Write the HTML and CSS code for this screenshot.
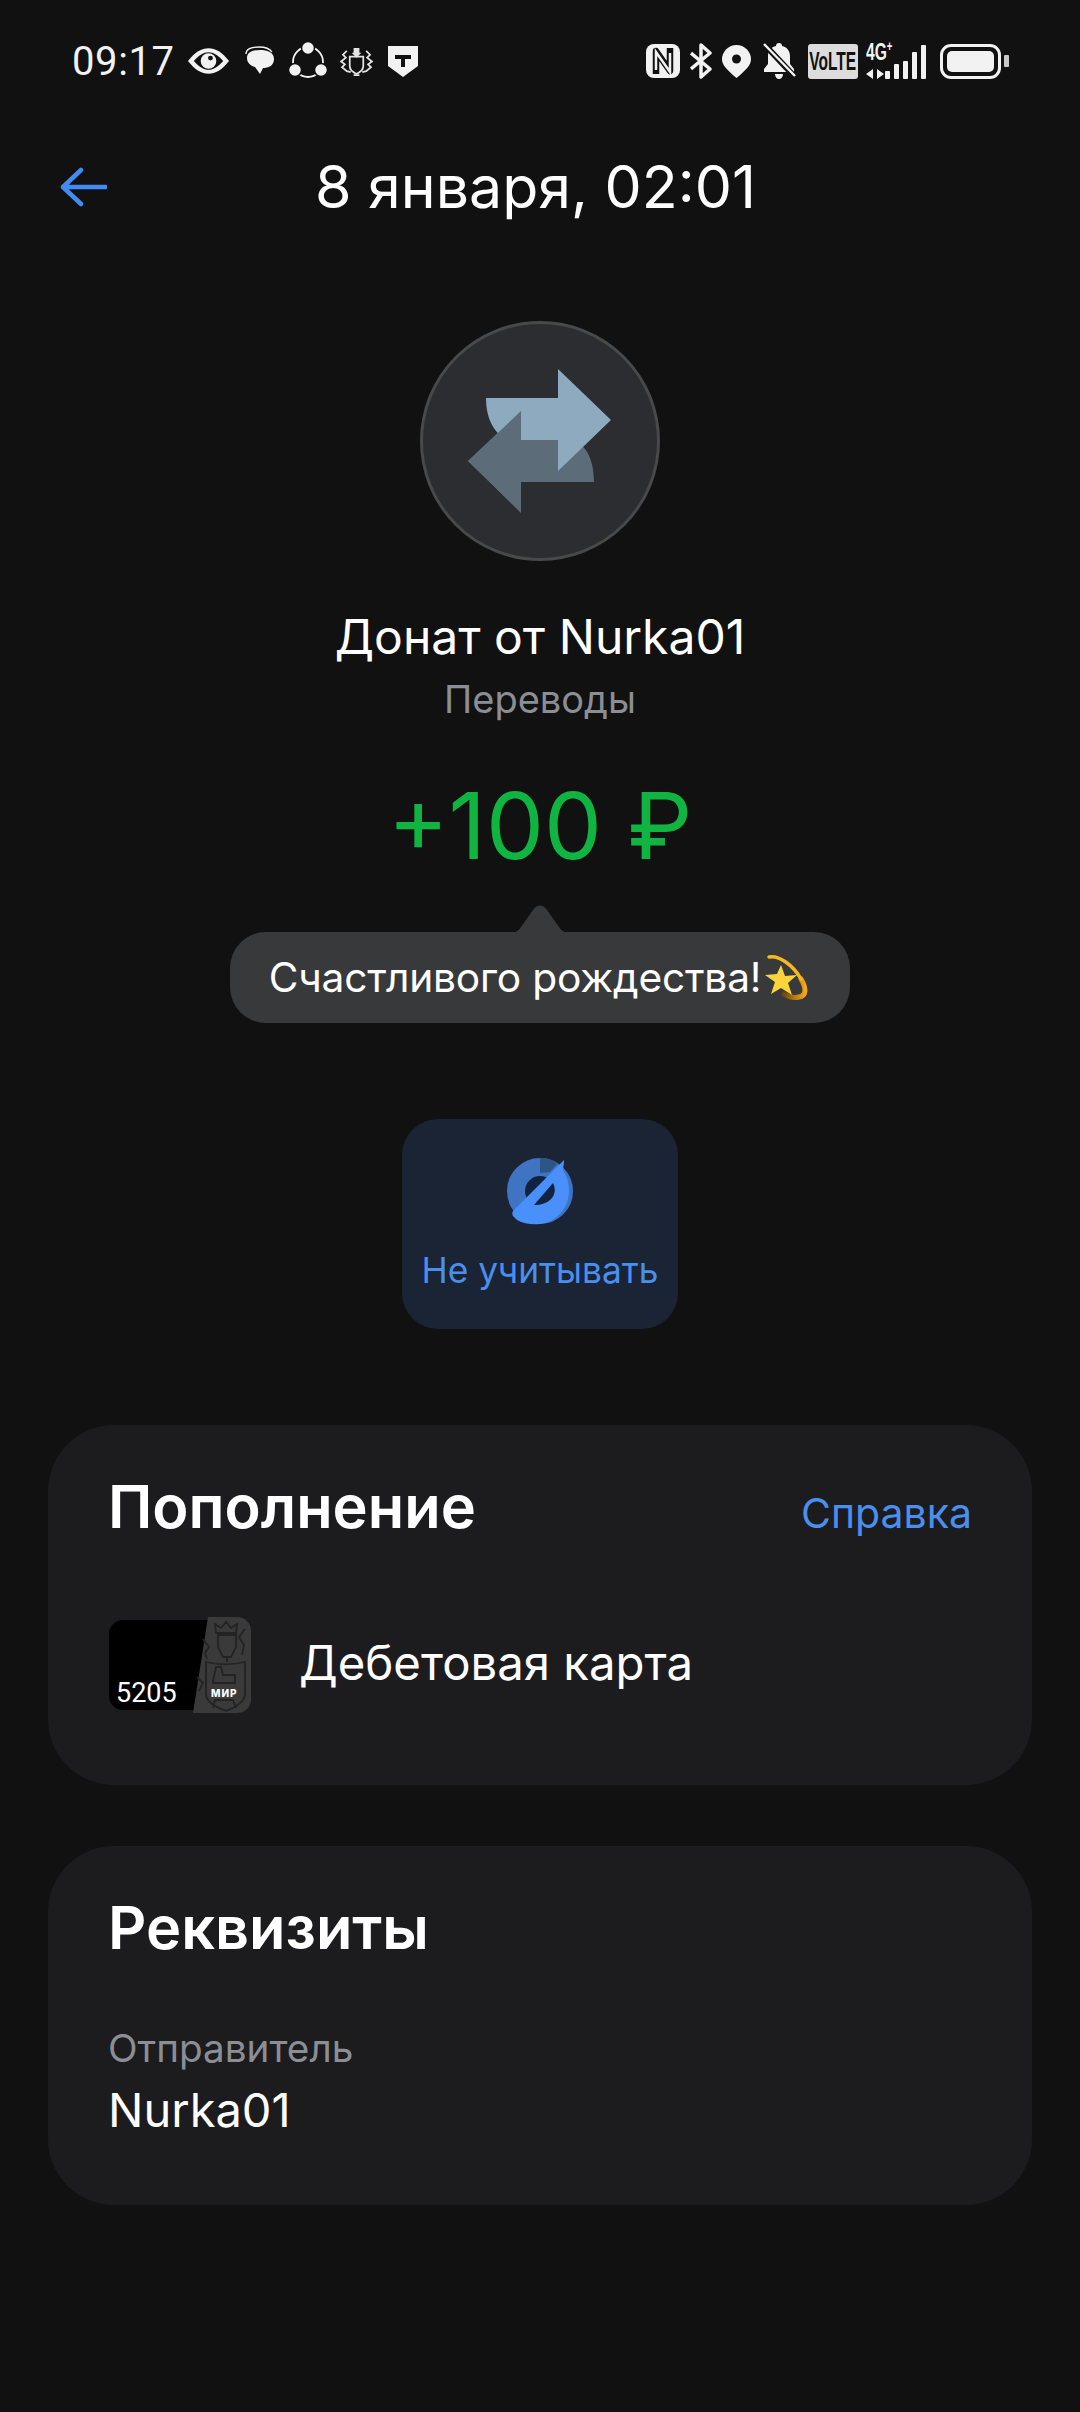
FILE: index.html

```html
<!DOCTYPE html>
<html lang="ru">
<head>
  <meta charset="UTF-8">
  <meta name="viewport" content="width=device-width, initial-scale=1.0">
  <title>Операция</title>
  <link rel="stylesheet" href="styles.css">
</head>
<body>
  <div class="status-bar">
    <div class="status-left">
      <span class="time">09:17</span>
      <svg class="ic-eye" viewBox="0 0 44 28"><path d="M1 14C8 5 15 1 22 1s14 4 21 13c-7 9-14 13-21 13S8 23 1 14Z" fill="#f2f2f2"/><path d="M7 14C12 8 17 5 22 5s10 3 15 9c-5 6-10 9-15 9S12 20 7 14Z" fill="#111"/><circle cx="22" cy="14" r="8" fill="#f2f2f2"/><circle cx="24" cy="11" r="2.500" fill="#111"/></svg>
      <svg class="ic-chat" viewBox="0 0 30 30"><path d="M1 8C1 3 6 1 14 1s11 2 13 5" fill="none" stroke="#f2f2f2" stroke-width="1.300"/><path d="M2 12C2 6 8 4 15 4s14 2 14 9-6 9-11 9l-3 6-5-7C6 20 2 17 2 12Z" fill="#f2f2f2"/></svg>
      <svg class="ic-share" viewBox="0 0 38 38"><circle cx="19" cy="20" r="15" fill="none" stroke="#f2f2f2" stroke-width="1.800"/><circle cx="19" cy="6" r="6.500" fill="#f2f2f2" stroke="#111" stroke-width="1.500"/><circle cx="6" cy="28" r="6.500" fill="#f2f2f2" stroke="#111" stroke-width="1.500"/><circle cx="32" cy="28" r="6.500" fill="#f2f2f2" stroke="#111" stroke-width="1.500"/></svg>
      <svg class="ic-crest" viewBox="0 0 36 30" fill="none" stroke="#e4e4e4" stroke-width="1.800"><path d="M11 10h14v10c0 4-3 6-7 8-4-2-7-4-7-8Z"/><path d="M15 6V1h6v5h2l-5 5-5-5Z" fill="#e4e4e4" stroke="none"/><path d="M8 4 4 8l3 3-5 4 4 3-3 3 5 4 4 1M28 4l4 4-3 3 5 4-4 3 3 3-5 4-4 1M15 29h6"/></svg>
      <svg class="ic-shield" viewBox="0 0 32 31"><path d="M1 0h30v20L16 31 1 20Z" fill="#f2f2f2"/><path d="M8 9h16v4h-6v8h-4v-8H8Z" fill="#111"/></svg>
    </div>
    <div class="status-right">
      <svg class="ic-nfc" viewBox="0 0 34 34"><rect width="34" height="34" rx="8" fill="#f2f2f2"/><path d="M10 30V7l14 20V4" fill="none" stroke="#111" stroke-width="6.500" stroke-linejoin="round"/><path d="M10 26V8l14 20V9" fill="none" stroke="#f2f2f2" stroke-width="2.500"/></svg>
      <svg class="ic-bt" viewBox="0 0 22 36"><path d="M1 10 20 26 11 34V2l9 8L1 26" fill="none" stroke="#f2f2f2" stroke-width="3.500" stroke-linejoin="round"/></svg>
      <svg class="ic-pin" viewBox="0 0 29 33"><path d="M14.500 33C5 25 0 20 0 14.500a14.500 14.500 0 0 1 29 0c0 5.500-5 10.500-14.500 18.500Z" fill="#f2f2f2"/><circle cx="14.500" cy="14" r="4.500" fill="#111"/></svg>
      <svg class="ic-bell" viewBox="0 0 34 38"><path d="M17 1c2 0 3 1 3 3 5 1 8 5 8 10v8l4 5v3H2v-3l4-5v-8c0-5 3-9 8-10 0-2 1-3 3-3ZM13 32h8c0 3-2 5-4 5s-4-2-4-5Z" fill="#f2f2f2"/><path d="M1 1 33 35" stroke="#111" stroke-width="6"/><path d="M2 2 33 34" stroke="#f2f2f2" stroke-width="2.500"/></svg>
      <span class="volte"><span class="volte-text">VoLTE</span></span>
      <div class="net">
        <div class="net-text">
          <span class="net-label">4G<sup class="net-plus">+</sup></span>
          <svg class="ic-updown" viewBox="0 0 18 10"><path d="M7 0v10L0 5ZM11 0v10l7-5Z" fill="#f2f2f2"/></svg>
        </div>
        <div class="bars">
          <i class="bar bar1"></i><i class="bar bar2"></i><i class="bar bar3"></i><i class="bar bar4"></i><i class="bar bar5"></i>
        </div>
      </div>
      <div class="battery"><div class="battery-fill"></div></div>
      <div class="battery-cap"></div>
    </div>
  </div>

  <div class="header">
    <svg class="back" viewBox="0 0 48 40"><path d="M22 3 4 20l18 17M4 20h43" fill="none" stroke="#428bf2" stroke-width="4.500" stroke-linecap="round" stroke-linejoin="round"/></svg>
    <h1 class="header-title">8 января, 02:01</h1>
  </div>

  <div class="summary">
    <div class="avatar">
      <svg class="avatar-icon" viewBox="0 0 144 144">
        <path d="M126 113H53v31L0 92l53-50v29h52c12 4 21 18 21 42Z" fill="#5d6c79"/>
        <path d="M18 29h72V0l53 51-53 51V71H40C28 66 18 52 18 29Z" fill="#8eaabf"/>
        <path d="M0 92 53 42v101Z" fill="#5d6c79"/>
      </svg>
    </div>
    <div class="donor">Донат от Nurka01</div>
    <div class="category">Переводы</div>
    <div class="amount">+100 ₽</div>
    <div class="message">
      <svg class="message-tip" viewBox="0 0 64 28"><path d="M0 28c6 0 10-1 13-6L25 5c4-6 10-6 14 0l12 17c3 5 7 6 13 6Z" fill="#38393b"/></svg>
      <span>Счастливого рождества!</span>
      <svg class="emoji" viewBox="0 0 44 50">
        <defs><linearGradient id="tail" x1="0" y1="0" x2="1" y2="0"><stop offset="0" stop-color="#6b4a10"/><stop offset="1" stop-color="#f5a818"/></linearGradient></defs>
        <path d="M37 26c6 10 5 17-2 18-5 1-11 0-15-3" fill="none" stroke="url(#tail)" stroke-width="5" stroke-linecap="round"/>
        <path d="M5 4c10-2 24 8 32 22" fill="none" stroke="#f5b81f" stroke-width="3.500" stroke-linecap="round"/>
        <path d="M17 12l4 11 12-1-9 8 4 12-11-7-10 6 4-12-10-7 12-1Z" fill="#fbd43c"/>
      </svg>
    </div>
    <div class="action">
      <svg class="action-icon" viewBox="0 0 68 68">
        <circle cx="34" cy="33" r="15" fill="#12233f"/>
        <circle cx="34" cy="33" r="24" fill="none" stroke="#3f74c2" stroke-width="18"/>
        <path d="M34 0a33 33 0 0 1 18 5L44 14 34 15Z" fill="#2e5587"/>
        <path d="M58 2 7 53c-1 2-1 3 0 5l4 4c7 4 15 5 23 4a33 33 0 0 0 29-33c0-8-2-14-6-21l1-8Z" fill="#4a90fa"/>
        <path d="M47 25c3 6 2 12-2 16-4 4-10 6-17 6Z" fill="#12233f"/>
      </svg>
      <span class="action-label">Не учитывать</span>
    </div>
  </div>

  <section class="card card-topup">
    <div class="card-head">
      <h2 class="card-title">Пополнение</h2>
      <span class="link">Справка</span>
    </div>
    <div class="account">
      <div class="thumb">
        <svg class="thumb-art" viewBox="0 0 142 96">
          <rect x="0" y="3" width="130" height="90" rx="14" fill="#000"/>
          <path d="M99 0h29c8 0 14 6 14 14v68c0 8-6 14-14 14H84Z" fill="#3a3a3b"/>
          <g fill="none" stroke="#232324" stroke-width="1.800">
            <path d="M107 16l-1-9 6 4 5-6 5 6 6-4-1 9Z"/>
            <path d="M109 18h18v12l-5 10h-8l-5-10Z"/>
            <path d="M118 40v5"/>
            <path d="M97 45c12 3 27 3 39 0v32c0 7-9 13-19 17-11-4-20-10-20-17Z"/>
            <path d="M104 64l3-14h5l2 8h12v8h-22Z"/>
            <path d="M104 91l2-8h18l3 8"/>
            <path d="M94 22l6 8-4 6 2 6M136 12l-6 8 5 8-2 10M88 60l6 6-4 8"/>
          </g>
        </svg>
        <span class="thumb-num">5205</span>
        <span class="thumb-mir">МИР</span>
      </div>
      <span class="account-name">Дебетовая карта</span>
    </div>
  </section>

  <section class="card card-details">
    <h2 class="card-title">Реквизиты</h2>
    <div class="detail-label">Отправитель</div>
    <div class="detail-value">Nurka01</div>
  </section>
</body>
</html>
```

FILE: styles.css

```css
* {
  box-sizing: border-box;
}
body {
  margin: 0;
  height: 2412px;
  overflow: hidden;
  background: #111;
  color: #fff;
  font-family: Inter, Roboto, sans-serif;
}
svg {
  display: block;
  flex: none;
}

/* status bar */
.status-bar {
  display: flex;
  justify-content: space-between;
  align-items: center;
  height: 100px;
  padding: 22px 71px 0 72px;
}
.status-left, .status-right {
  display: flex;
  align-items: center;
}
.time {
  font-family: Roboto, sans-serif;
  font-size: 40px;
  font-weight: 400;
  letter-spacing: 0.6px;
  color: #f2f2f2;
  margin-right: 12px;
}
.ic-eye { width: 43px; height: 28px; margin-right: 15px; }
.ic-chat { width: 30px; height: 30px; margin-right: 14px; }
.ic-share { width: 38px; height: 38px; margin-right: 12px; }
.ic-crest { width: 35px; height: 29px; margin-right: 13px; }
.ic-shield { width: 32px; height: 31px; }
.ic-nfc { width: 34px; height: 34px; margin-right: 10px; }
.ic-bt { width: 22px; height: 36px; margin-right: 10px; }
.ic-pin { width: 29px; height: 33px; margin-right: 11px; }
.ic-bell { width: 34px; height: 38px; margin-right: 12px; }
.volte {
  display: flex;
  justify-content: center;
  width: 50px;
  height: 35px;
  border-radius: 3px;
  background: #dcdcdc;
  color: #111;
}
.volte-text {
  font-family: "Liberation Sans", sans-serif;
  font-size: 25px;
  font-weight: 700;
  line-height: 35px;
  transform: scaleX(0.62);
}
.net {
  display: flex;
  align-items: flex-end;
  height: 35px;
  margin: 0 14px 0 8px;
}
.net-text {
  display: flex;
  flex-direction: column;
  justify-content: space-between;
  height: 35px;
  width: 18px;
  margin-right: 1px;
}
.net-label {
  font-family: "Liberation Sans", sans-serif;
  font-size: 23px;
  font-weight: 700;
  line-height: 17px;
  white-space: nowrap;
  color: #f2f2f2;
  transform: scaleX(0.68);
  transform-origin: left top;
}
.net-plus {
  font-size: 14px;
  line-height: 0;
}
.ic-updown { width: 18px; height: 10px; }
.bars {
  display: flex;
  align-items: flex-end;
  gap: 4px;
}
.bar {
  display: block;
  width: 5px;
  background: #f2f2f2;
  border-radius: 1px;
}
.bar1 { height: 8px; }
.bar2 { height: 15px; }
.bar3 { height: 18px; }
.bar4 { height: 27px; }
.bar5 { height: 34px; }
.battery {
  width: 61px;
  height: 35px;
  padding: 4px;
  border: 3px solid #f2f2f2;
  border-radius: 11px;
}
.battery-fill {
  height: 100%;
  border-radius: 5px;
  background: #f2f2f2;
}
.battery-cap {
  width: 5px;
  height: 12px;
  margin-left: 3px;
  border-radius: 1px;
  background: #c8c8c8;
}

/* header */
.header {
  position: relative;
  height: 86px;
  margin-top: 43px;
  padding-right: 9px;
  display: flex;
  align-items: center;
  justify-content: center;
}
.back {
  position: absolute;
  left: 59px;
  top: 24px;
  width: 48px;
  height: 40px;
}
.header-title {
  margin: 0;
  font-size: 59px;
  font-weight: 400;
}

/* summary */
.summary {
  display: flex;
  flex-direction: column;
  align-items: center;
  padding-top: 92px;
}
.avatar {
  display: flex;
  align-items: center;
  justify-content: center;
  width: 240px;
  height: 240px;
  border: 3px solid #48494b;
  border-radius: 50%;
  background: #2c2d30;
}
.avatar-icon {
  width: 144px;
  height: 144px;
}
.donor {
  margin-top: 46px;
  font-size: 48px;
  line-height: 60px;
}
.category {
  margin-top: 4px;
  font-size: 38px;
  line-height: 56px;
  color: #8b8e94;
}
.amount {
  margin-top: 47px;
  font-size: 92px;
  line-height: 104px;
  color: #0fb441;
}
.message {
  position: relative;
  display: flex;
  align-items: center;
  height: 91px;
  margin-top: 54px;
  padding: 0 42px 0 39px;
  border-radius: 36px;
  background: #38393b;
  font-size: 40.700px;
  letter-spacing: -0.2px;
  white-space: nowrap;
}
.message-tip {
  position: absolute;
  left: 50%;
  top: -27px;
  width: 64px;
  height: 28px;
  margin-left: -32px;
}
.emoji {
  width: 44px;
  height: 50px;
  margin-left: 3px;
}
.action {
  display: flex;
  flex-direction: column;
  align-items: center;
  width: 276px;
  height: 210px;
  margin-top: 96px;
  padding-top: 39px;
  border-radius: 36px;
  background: #1a2434;
}
.action-icon {
  width: 68px;
  height: 68px;
}
.action-label {
  margin-top: 22px;
  font-size: 35.300px;
  line-height: 46px;
  color: #4a8fee;
  white-space: nowrap;
}

/* cards */
.card {
  margin: 0 48px;
  padding: 48px 60px 0;
  border-radius: 66px;
  background: #1c1c1e;
}
.card-topup {
  height: 360px;
  margin-top: 96px;
}
.card-details {
  height: 359px;
  margin-top: 61px;
}
.card-head {
  display: flex;
  justify-content: space-between;
  align-items: baseline;
}
.card-title {
  margin: 0;
  font-size: 59.500px;
  font-weight: 600;
  line-height: 66px;
}
.link {
  font-size: 41px;
  color: #4a8fee;
}
.account {
  display: flex;
  align-items: center;
  margin-top: 78px;
  padding-left: 1px;
}
.thumb {
  position: relative;
  width: 142px;
  height: 96px;
  margin-right: 48px;
}
.thumb-art {
  width: 142px;
  height: 96px;
}
.thumb-num {
  position: absolute;
  left: 7px;
  bottom: 3px;
  font-family: Roboto, sans-serif;
  font-size: 27px;
  line-height: 34px;
}
.thumb-mir {
  position: absolute;
  left: 102px;
  top: 70px;
  font-size: 10px;
  font-weight: 800;
  line-height: 12px;
  letter-spacing: 1px;
}
.account-name {
  padding-bottom: 5px;
  font-size: 47.300px;
}
.detail-label {
  margin-top: 64px;
  font-size: 38.700px;
  line-height: 48px;
  color: #8b8e94;
}
.detail-value {
  margin-top: 9px;
  font-size: 47px;
  line-height: 58px;
}
```
